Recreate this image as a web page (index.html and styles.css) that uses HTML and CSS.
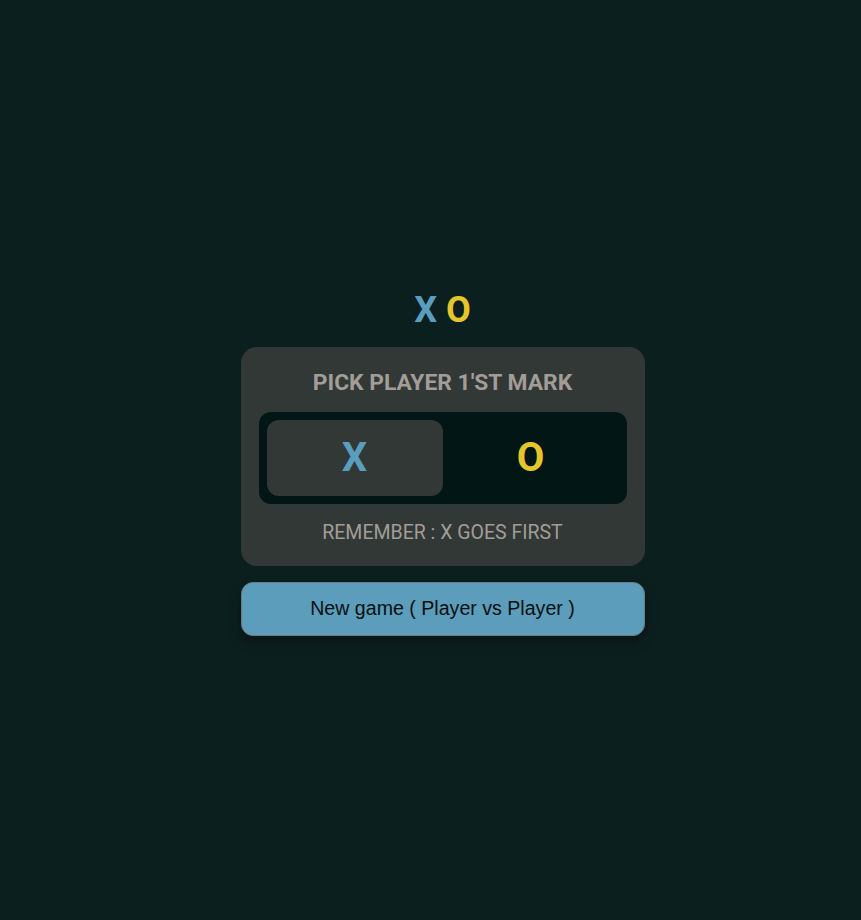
FILE: index.html
```html
<!DOCTYPE html>
<html lang="en">
<head>
<meta charset="utf-8">
<title>XO</title>
<link rel="stylesheet" href="styles.css">
</head>
<body>
<main class="app">
  <h1 class="logo"><span class="x">X</span> <span class="o">O</span></h1>
  <section class="card">
    <h2 class="card-title">PICK PLAYER 1'ST MARK</h2>
    <div class="toggle">
      <button class="mark mark-x active">X</button>
      <button class="mark mark-o">O</button>
    </div>
    <p class="note">REMEMBER : X GOES FIRST</p>
  </section>
  <button class="new-game">New game ( Player vs Player )</button>
</main>
</body>
</html>
```
FILE: styles.css
```css
html, body {
  margin: 0;
  padding: 0;
}
body {
  background: #0c1f1f;
  font-family: Roboto, "Liberation Sans", sans-serif;
  min-height: 100vh;
}
.app {
  min-height: 100vh;
  box-sizing: border-box;
  padding-left: 24px;
  padding-top: 4px;
  display: flex;
  flex-direction: column;
  align-items: center;
  justify-content: center;
}
.logo {
  margin: 0 0 16px;
  font-size: 36px;
  line-height: 42px;
  font-weight: 700;
}
.x { color: #5a9ebf; }
.o { color: #e5c52a; }
.card {
  width: 404px;
  box-sizing: border-box;
  background: #323836;
  border-radius: 16px;
  padding: 22px 18px 22px;
  display: flex;
  flex-direction: column;
  align-items: stretch;
}
.card-title {
  margin: 0 0 16px;
  text-align: center;
  font-size: 22.8px;
  line-height: 27px;
  font-weight: 700;
  color: #a29d97;
}
.toggle {
  background: #011615;
  border-radius: 12px;
  padding: 8px;
  display: grid;
  grid-template-columns: 1fr 1fr;
}
.mark {
  height: 76px;
  border: 0;
  border-radius: 12px;
  background: transparent;
  font-family: Roboto, "Liberation Sans", sans-serif;
  font-size: 40px;
  font-weight: 700;
  padding: 0;
}
.mark.active { background: #323836; }
.mark-x { color: #5a9ebf; }
.mark-o { color: #e5c52a; }
.note {
  margin: 17px 0 0;
  text-align: center;
  font-size: 19.5px;
  line-height: 23px;
  color: #a29d97;
}
.new-game {
  margin-top: 16px;
  width: 404px;
  height: 54px;
  box-sizing: border-box;
  background: #5b9dba;
  border: 1px solid #6b7a80;
  border-radius: 12px;
  font-family: "Liberation Sans", Arial, sans-serif;
  font-size: 19.6px;
  color: #0a0f10;
  box-shadow: 0 6px 12px rgba(0, 0, 0, 0.35);
}
```
